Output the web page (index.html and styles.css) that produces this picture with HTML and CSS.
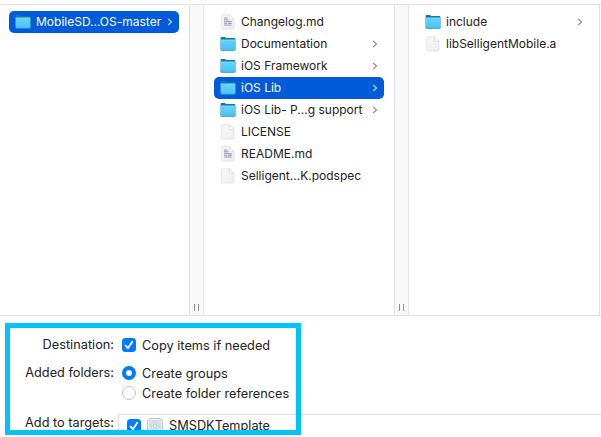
FILE: index.html
```html
<!DOCTYPE html>
<html lang="en">
<head>
<meta charset="utf-8">
<title>Add files</title>
<link rel="stylesheet" href="styles.css">
</head>
<body>
<svg width="0" height="0" class="defs" aria-hidden="true">
  <defs>
    <linearGradient id="blue" x1="0" y1="0" x2="0" y2="1"><stop offset="0" stop-color="#68d4fb"/><stop offset="1" stop-color="#48c2f2"/></linearGradient>
    <linearGradient id="paper" x1="0" y1="0" x2="1" y2="1"><stop offset="0" stop-color="#f8f8f8"/><stop offset="1" stop-color="#eeeeee"/></linearGradient>
    <symbol id="folder" viewBox="0 0 16 16">
      <path d="M.6 2.1Q.6 1 1.5 1H5l1.2.9h8.2q1 0 1 1v10H.6z" fill="#16799f"/>
      <path d="M.6 3.7h14.8v9.6q0 .9-.9.9h-13q-.9 0-.9-.9z" fill="url(#blue)"/>
      <path d="M.6 4h14.8" stroke="#8be0fc" stroke-width=".6"/>
      <path d="M.6 13.4q0 1 .9 1h13q.9 0 .9-1" fill="none" stroke="#268fb9" stroke-width=".8"/>
    </symbol>
    <symbol id="doc" viewBox="0 0 16 16">
      <path d="M2.6.8h6.7l4.7 4.6v8.7q0 1-1 1H2.6q-1 0-1-1V1.8q0-1 1-1z" fill="url(#paper)" stroke="#dedede" stroke-width=".7"/>
      <path d="M9.3.8v3.6q0 1 1 1H14z" fill="#fff" stroke="#cfcfcf" stroke-width=".6"/>
    </symbol>
    <symbol id="text" viewBox="0 0 16 16">
      <path d="M2.6.8h6.7l4.7 4.6v8.7q0 1-1 1H2.6q-1 0-1-1V1.8q0-1 1-1z" fill="url(#paper)" stroke="#dedede" stroke-width=".7"/>
      <path d="M9.3.8v3.6q0 1 1 1H14z" fill="#fff" stroke="#d4d4d4" stroke-width=".6"/>
      <path d="M4 4h3.5M6 7.6h5.8M4 11.1h7.5" stroke="#7fa6b4" stroke-width="1"/>
      <path d="M4 5.8h4.5M8 9.3h3.8" stroke="#8a86b5" stroke-width="1"/>
      <path d="M4 7.6h1.8M4 9.3h3.4" stroke="#d47990" stroke-width="1"/>
    </symbol>
    <symbol id="chev" viewBox="0 0 6 8"><path d="M1.2 1l3.3 3-3.3 3" fill="none" stroke="currentColor" stroke-width="1.1"/></symbol>
    <symbol id="check" viewBox="0 0 14 14"><path d="M3.6 7.5l2.3 2.7 4.4-6.4" fill="none" stroke="#fff" stroke-width="1.8" stroke-linecap="round" stroke-linejoin="round"/></symbol>
  </defs>
</svg>
<main class="dialog">
  <div class="browser">
    <div class="column first">
      <div class="row selected"><svg class="icon"><use href="#folder"/></svg><span class="name">MobileSD...OS-master</span><svg class="chev"><use href="#chev"/></svg></div>
    </div>
    <div class="splitter"><i></i><i></i></div>
    <div class="column">
      <div class="row"><svg class="icon"><use href="#text"/></svg><span class="name">Changelog.md</span></div>
      <div class="row"><svg class="icon"><use href="#folder"/></svg><span class="name">Documentation</span><svg class="chev"><use href="#chev"/></svg></div>
      <div class="row"><svg class="icon"><use href="#folder"/></svg><span class="name">iOS Framework</span><svg class="chev"><use href="#chev"/></svg></div>
      <div class="row selected"><svg class="icon"><use href="#folder"/></svg><span class="name">iOS Lib</span><svg class="chev"><use href="#chev"/></svg></div>
      <div class="row"><svg class="icon"><use href="#folder"/></svg><span class="name">iOS Lib- P...g support</span><svg class="chev"><use href="#chev"/></svg></div>
      <div class="row"><svg class="icon"><use href="#doc"/></svg><span class="name">LICENSE</span></div>
      <div class="row"><svg class="icon"><use href="#text"/></svg><span class="name">README.md</span></div>
      <div class="row"><svg class="icon"><use href="#doc"/></svg><span class="name">Selligent...K.podspec</span></div>
    </div>
    <div class="splitter"><i></i><i></i></div>
    <div class="column">
      <div class="row"><svg class="icon"><use href="#folder"/></svg><span class="name">include</span><svg class="chev"><use href="#chev"/></svg></div>
      <div class="row"><svg class="icon"><use href="#doc"/></svg><span class="name">libSelligentMobile.a</span></div>
    </div>
    <div class="edge"></div>
  </div>
  <div class="options">
    <div class="label">Destination:</div>
    <div class="option"><span class="box"><svg><use href="#check"/></svg></span><span class="caption">Copy items if needed</span></div>
    <div class="label folders">Added folders:</div>
    <div class="choices">
      <div class="option"><span class="radio on"></span><span class="caption">Create groups</span></div>
      <div class="option"><span class="radio"></span><span class="caption">Create folder references</span></div>
    </div>
    <div class="label targets">Add to targets:</div>
    <div class="table">
      <span class="box"><svg><use href="#check"/></svg></span>
      <svg class="target" viewBox="0 0 16 16"><rect x=".5" y=".5" width="15" height="15" rx="3" fill="#f1f4f5" stroke="#bfc5c7"/><rect x="2.5" y="2.5" width="11" height="11" fill="#dfe9ec" stroke="#c5d4d9" stroke-width=".7"/><circle cx="8" cy="8" r="4.2" fill="none" stroke="#b7cad0" stroke-width=".8"/><circle cx="8" cy="8" r="2" fill="none" stroke="#b7cad0" stroke-width=".8"/></svg>
      <span>SMSDKTemplate</span>
    </div>
  </div>
  <div class="highlight"></div>
</main>
</body>
</html>
```
FILE: styles.css
```css
* { box-sizing: border-box; }
body {
  margin: 0;
  background: #fff;
  color: #222;
  font: 12px/22px Inter, "Liberation Sans", sans-serif;
  overflow: hidden;
}
.defs { display: block; }
.dialog { position: relative; height: 437px; padding-top: 4px; overflow: hidden; }
.browser {
  display: grid;
  grid-template-columns: 189px 15px 190px 15px 190px 1px 1fr;
  height: 312px;
  border-top: 1px solid #e2e2e2;
  border-bottom: 1px solid #e2e2e2;
}
.column { padding: 6px 10px 0; }
.column.first { padding-left: 9px; }
.row {
  display: flex;
  align-items: center;
  height: 22px;
  padding: 0 6px;
  border-radius: 5px;
  white-space: nowrap;
}
.first .row { width: 170px; }
.selected { background: #005bdb; color: #fff; }
.icon { width: 16px; height: 16px; margin-right: 5px; flex: none; }
.name { flex: 1; }
.chev { width: 6px; height: 8px; flex: none; color: #8b8b8b; }
.selected .chev { color: #c5dcff; }
.splitter {
  display: flex;
  justify-content: center;
  align-items: flex-end;
  gap: 3px;
  padding-bottom: 4px;
  background: #f9f9f9;
  border-left: 1px solid #e2e2e2;
  border-right: 1px solid #e5e5e5;
}
.splitter i { width: 1px; height: 7px; background: #919191; }
.edge { background: #e2e2e2; }
.options {
  display: grid;
  grid-template-columns: 114px 1fr;
  grid-template-rows: 40px 58px 40px;
  padding-top: 18px;
  font-size: 12.75px;
  line-height: 20px;
}
.label { text-align: right; padding-top: 1px; }
.option { display: flex; align-items: center; height: 20px; gap: 6px; padding-left: 8px; }
.caption { padding-top: 2px; }
.options > .option { margin-top: 1px; }
.choices { margin-top: -11px; }
.folders { margin-top: -12px; }
.targets { margin-top: -20px; }
.box { display: flex; width: 14px; height: 14px; flex: none; border-radius: 3.5px; background: #007aff; }
.box svg { width: 14px; height: 14px; }
.radio { width: 14px; height: 14px; flex: none; border: 1px solid #c2c2c2; border-radius: 50%; background: #fff; }
.radio.on { border: 4px solid #007aff; }
.table {
  display: flex;
  align-items: center;
  height: 50px;
  margin: -18px 0 0 4px;
  padding: 0 8px 28px;
  border-top: 1px solid #dfdfdf;
  border-left: 1px solid #dfdfdf;
  white-space: nowrap;
}
.target { width: 16px; height: 16px; margin: 0 6px; }
.highlight { position: absolute; left: 5px; top: 323px; width: 296px; height: 112px; border: 5px solid #00c3fc; }
```
